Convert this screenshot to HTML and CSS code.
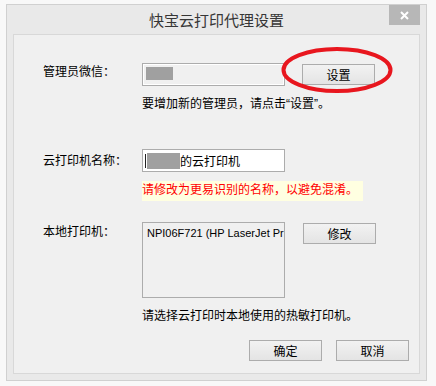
FILE: index.html
```html
<!DOCTYPE html>
<html lang="zh-CN">
<head>
<meta charset="utf-8">
<title>快宝云打印代理设置</title>
<link rel="stylesheet" href="styles.css">
</head>
<body>
<div class="window">
  <div class="titlebar">
    <div class="spacer"></div>
    <div class="title">快宝云打印代理设置</div>
    <div class="close">
      <svg width="31" height="20" viewBox="0 0 31 20"><path d="M12 7 L19 14 M19 7 L12 14" stroke="#fff" stroke-width="2" fill="none"/></svg>
    </div>
  </div>
  <div class="panel">
    <div class="row">
      <div class="label">管理员微信：</div>
      <div class="input readonly"><span class="mask mask-a"></span></div>
      <button class="btn btn-side">设置</button>
    </div>
    <div class="hint hint-1">要增加新的管理员，请点击“设置”。</div>

    <div class="row row-2">
      <div class="label label-2">云打印机名称：</div>
      <div class="input"><span class="caret"></span><span class="mask mask-b"></span><span class="val">的云打印机</span></div>
    </div>
    <div class="note-wrap"><span class="note">请修改为更易识别的名称，以避免混淆。</span></div>

    <div class="row row-3">
      <div class="label label-3">本地打印机：</div>
      <div class="listbox"><div class="item">NPI06F721 (HP LaserJet Pr</div></div>
      <button class="btn btn-side btn-side-3">修改</button>
    </div>
    <div class="hint hint-3">请选择云打印时本地使用的热敏打印机。</div>

    <div class="actions">
      <button class="btn">确定</button>
      <button class="btn">取消</button>
    </div>

    <svg class="mark" width="116" height="50" viewBox="0 0 116 50"><ellipse cx="58" cy="25" rx="53.5" ry="21" fill="none" stroke="#e8161e" stroke-width="4"/></svg>
  </div>
</div>
</body>
</html>
```

FILE: styles.css
```css
* { box-sizing: border-box; }
html, body { margin: 0; padding: 0; }
body {
  background: #f8f8f8;
  font-family: "Liberation Sans", "Noto Sans CJK SC", sans-serif;
  font-size: 12px;
  color: #000;
}
.window {
  margin: 4px 0 0 6px;
  width: 421px;
  height: 377px;
  border: 1px solid #d0d0d0;
  background: #e9e9e9;
  padding: 0 6px 6px;
  display: flex;
  flex-direction: column;
}
.titlebar {
  height: 29px;
  display: flex;
  align-items: flex-start;
}
.spacer { width: 31px; }
.title {
  flex: 1;
  text-align: center;
  font-family: "Noto Sans CJK SC", sans-serif;
  font-size: 15px;
  line-height: 18px;
  padding-top: 6px;
  color: #363636;
}
.close {
  width: 31px;
  height: 20px;
  background: #b7b7b7;
}
.close svg { display: block; }
.panel {
  position: relative;
  height: 340px;
  border: 1px solid #d8d8d8;
  background: #f0f0f0;
  padding: 28px 10px 0 29px;
  display: flex;
  flex-direction: column;
}
.row { display: flex; align-items: flex-start; }
.label {
  width: 99px;
  line-height: 16px;
  font-family: "Noto Sans CJK SC", sans-serif;
}
.label-2 { padding-top: 3px; }
.label-3 { padding-top: 1px; }
.input {
  width: 143px;
  height: 23px;
  border: 1px solid #acacac;
  background: #fff;
  display: flex;
  align-items: center;
  padding-left: 2px;
  line-height: 16px;
}
.input.readonly {
  background: #f0f0f0;
  box-shadow: inset 0 0 0 1px #fff;
  align-items: flex-start;
  padding: 3px 0 0 3px;
}
.mask { display: block; background: #a0a0a0; }
.mask-a { width: 27px; height: 13px; }
.caret { width: 1px; height: 14px; background: #222; margin-right: 1px; }
.mask-b { width: 33px; height: 16px; }
.val { font-family: "Noto Sans CJK SC", sans-serif; }
.btn {
  width: 73px;
  height: 21px;
  border: 1px solid #acacac;
  background: linear-gradient(#f2f2f2, #e4e4e4);
  font-family: "Noto Sans CJK SC", sans-serif;
  font-size: 12px;
  line-height: 16px;
  padding: 0;
  color: #000;
}
.btn-side { margin-left: 17px; margin-top: 1px; }
.btn-side-3 { margin-left: 18px; }
.hint {
  margin-left: 99px;
  line-height: 16px;
}
.hint-1 { margin-top: 10px; }
.row-2 { margin-top: 37px; }
.note-wrap { margin: 9px 0 0 99px; display: flex; }
.note {
  display: block;
  height: 20px;
  line-height: 16px;
  background: #ffffe1;
  color: #ff0000;
  padding-right: 5px;
  font-family: "Noto Sans CJK SC", sans-serif;
}
.row-3 { margin-top: 21px; }
.listbox {
  width: 143px;
  height: 76px;
  border: 1px solid #acacac;
  background: #f0f0f0;
  overflow: hidden;
  padding: 3px 0 0 4px;
}
.item {
  white-space: nowrap;
  overflow: hidden;
  font-family: "Liberation Sans", sans-serif;
  font-size: 11px;
  line-height: 14px;
}
.hint-3 { margin-top: 10px; }
.actions {
  margin-top: 16px;
  display: flex;
  justify-content: flex-end;
  gap: 14px;
}
.mark {
  position: absolute;
  left: 265px;
  top: 10px;
}
```
